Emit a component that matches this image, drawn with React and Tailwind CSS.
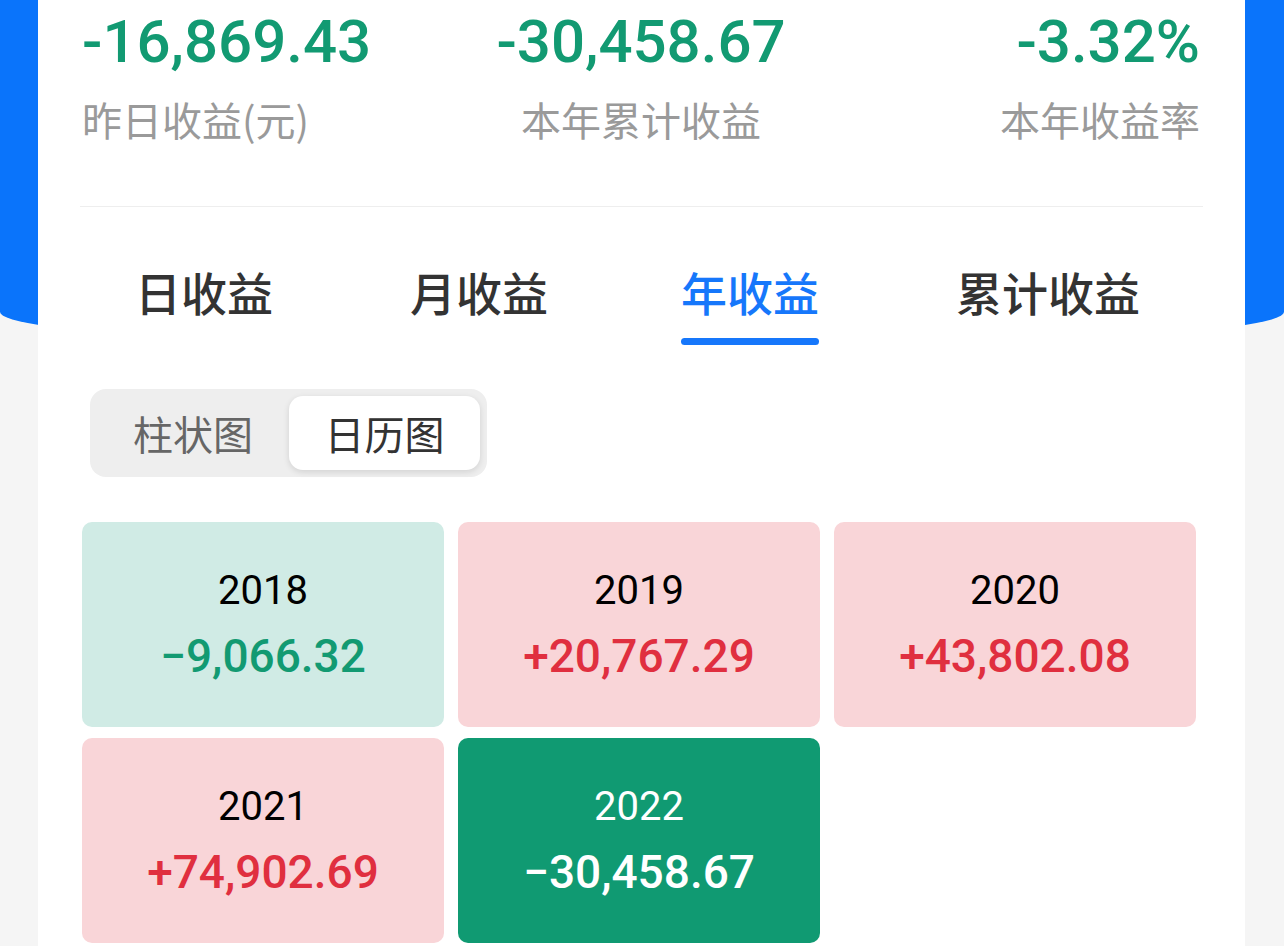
import React from "react";

const NUM = { fontFamily: "Roboto, 'Liberation Sans', sans-serif" };
const CJK = { fontFamily: "'Noto Sans CJK SC', 'Noto Sans', sans-serif" };

const stats = [
  { v: "-16,869.43", l: "昨日收益(元)", a: "items-start" },
  { v: "-30,458.67", l: "本年累计收益", a: "items-center" },
  { v: "-3.32%", l: "本年收益率", a: "items-end" },
];

const tabs = [
  { t: "日收益", m: "ml-[97px]" },
  { t: "月收益", m: "ml-[137px]" },
  { t: "年收益", m: "ml-[133px]" },
  { t: "累计收益", m: "ml-[137px]" },
];

const years = [
  { y: "2018", v: "−9,066.32", t: "loss" },
  { y: "2019", v: "+20,767.29", t: "gain" },
  { y: "2020", v: "+43,802.08", t: "gain" },
  { y: "2021", v: "+74,902.69", t: "gain" },
  { y: "2022", v: "−30,458.67", t: "current" },
];

function Cell({ y, v, t }) {
  const bg =
    t === "loss" ? "bg-[#d0ebe5]" : t === "gain" ? "bg-[#f9d5d8]" : "bg-[#109a72]";
  const yc = t === "current" ? "text-white" : "text-black";
  const vc =
    t === "loss" ? "text-[#129a72]" : t === "gain" ? "text-[#e02f3f]" : "text-white";
  return (
    <div className={`${bg} h-[205px] rounded-[10px] flex flex-col items-center justify-center`}>
      <div className={`${yc} text-[40px] leading-[40px]`} style={NUM}>
        {y}
      </div>
      <div className={`${vc} text-[46px] leading-[46px] font-medium mt-[22px]`} style={NUM}>
        {v}
      </div>
    </div>
  );
}

export default function App() {
  return (
    <div className="relative min-h-[946px] w-full bg-[#f5f5f5] overflow-hidden">
      <div className="absolute left-0 top-0 w-full h-[350px] bg-[#0a74fb] rounded-b-[50%_38px]" />
      <div className="relative ml-[38px] mr-[39px] min-h-[946px] bg-white">
        {/* stats */}
        <div className="grid grid-cols-3 pl-[44px] pr-[45px] pt-[12px]">
          {stats.map((s) => (
            <div key={s.l} className={`flex flex-col ${s.a}`}>
              <div
                className="text-[60px] leading-[60px] font-medium text-[#129a72] whitespace-nowrap"
                style={NUM}
              >
                {s.v}
              </div>
              <div
                className="mt-[27px] text-[40px] leading-[40px] text-[#9a9a9a] whitespace-nowrap"
                style={CJK}
              >
                {s.l}
              </div>
            </div>
          ))}
        </div>

        {/* divider */}
        <div className="mx-[42px] mt-[67px] h-px bg-[#eeeeee]" />

        {/* tabs */}
        <div className="flex mt-[61px]">
          {tabs.map(({ t, m }) => {
            const active = t === "年收益";
            return (
              <div key={t} className={`flex flex-col items-center ${m}`}>
                <div
                  className={`text-[46px] leading-[46px] font-medium whitespace-nowrap ${
                    active ? "text-[#1677fb]" : "text-[#333333]"
                  }`}
                  style={CJK}
                >
                  {t}
                </div>
                <div
                  className={`mt-[24px] h-[7px] w-full rounded-full ${
                    active ? "bg-[#1677fb]" : "bg-transparent"
                  }`}
                />
              </div>
            );
          })}
        </div>

        {/* segmented */}
        <div className="ml-[52px] mt-[44px] inline-flex p-[7px] rounded-[16px] bg-[#eeeeee]">
          <div
            className="h-[74px] w-[192px] flex items-center justify-center text-[40px] text-[#666666]"
            style={CJK}
          >
            柱状图
          </div>
          <div
            className="h-[74px] w-[191px] flex items-center justify-center text-[40px] text-[#333333] bg-white rounded-[14px] shadow-[0_2px_6px_rgba(0,0,0,0.12)]"
            style={CJK}
          >
            日历图
          </div>
        </div>

        {/* grid */}
        <div className="ml-[44px] mr-[49px] mt-[45px] grid grid-cols-3 gap-x-[14px] gap-y-[11px]">
          {years.map((c) => (
            <Cell key={c.y} {...c} />
          ))}
        </div>
      </div>
    </div>
  );
}
